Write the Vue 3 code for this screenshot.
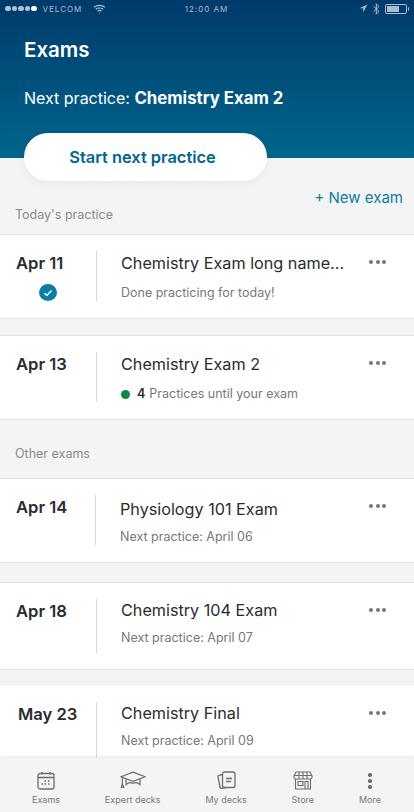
<script setup>
const todayExams = [
  { id: 1, date: "Apr 11", name: "Chemistry Exam long name...", done: true, note: "Done practicing for today!" },
  { id: 2, date: "Apr 13", name: "Chemistry Exam 2", count: 4, note: "Practices until your exam" },
];

const otherExams = [
  { id: 3, date: "Apr 14", name: "Physiology 101 Exam", note: "Next practice: April 06", variant: "shifted" },
  { id: 4, date: "Apr 18", name: "Chemistry 104 Exam", note: "Next practice: April 07", variant: "tall" },
  { id: 5, date: "May 23", name: "Chemistry Final", note: "Next practice: April 09", variant: "last" },
];

const sections = [
  { title: "Today's practice", exams: todayExams },
  { title: "Other exams", exams: otherExams },
];
</script>

<template>
  <div class="app">
    <header class="hero">
      <div class="status">
        <div class="status-left">
          <span class="signal"><i v-for="n in 5" :key="n"></i></span>
          <span>VELCOM</span>
          <svg class="wifi" width="13" height="10" viewBox="0 0 13 10" fill="none" stroke="currentColor" stroke-width="1.2">
            <path d="M1 3.2c3-2.4 8-2.4 11 0M2.8 5.2c2-1.6 5.4-1.6 7.4 0M4.6 7.1c1.1-.8 2.7-.8 3.8 0" />
            <path d="M6.5 9.6l-1-1.2h2z" fill="currentColor" stroke="none" />
          </svg>
        </div>
        <span class="clock">12:00 AM</span>
        <div class="status-right">
          <svg width="9" height="9" viewBox="0 0 9 9"><path d="M8.5.5L.5 4.3h3.7v3.9z" fill="currentColor" /></svg>
          <svg width="7" height="12" viewBox="0 0 7 12" fill="none" stroke="currentColor" stroke-width="1"><path d="M.6 3.2l5.3 5.2-2.6 2.8V.8l2.6 2.8-5.3 5.2" /></svg>
          <span class="battery"><i></i></span>
        </div>
      </div>
      <h1>Exams</h1>
      <p class="next">Next practice: <b>Chemistry Exam 2</b></p>
    </header>

    <main class="content">
      <button class="start">Start next practice</button>
      <a class="new-exam">+ New exam</a>

      <section v-for="section in sections" :key="section.title" class="section">
        <h2>{{ section.title }}</h2>
        <article v-for="exam in section.exams" :key="exam.id" class="card" :class="exam.variant">
          <div class="date">
            <strong>{{ exam.date }}</strong>
            <span v-if="exam.done" class="check">
              <svg width="10" height="8" viewBox="0 0 10 8" fill="none" stroke="#fff" stroke-width="1.5"><path d="M1.5 4.2l2.3 2.2 4.7-5" /></svg>
            </span>
          </div>
          <div class="body">
            <h3>{{ exam.name }}</h3>
            <p>
              <i v-if="exam.count" class="dot"></i>
              <b v-if="exam.count">{{ exam.count }}</b>
              <span>{{ exam.note }}</span>
            </p>
          </div>
          <span class="more-dots"><i v-for="n in 3" :key="n"></i></span>
        </article>
      </section>
    </main>

    <nav class="tabs">
      <div class="tab">
        <svg width="18" height="19" viewBox="0 0 18 19" fill="none" stroke="#6a6e72" stroke-width="1.3">
          <rect x="1" y="2.5" width="16" height="15.5" rx="2" />
          <path d="M1 6.500h16M5 1v2.500M13 1v2.500" />
          <path d="M7.5 10h1.500M11 10h1.500M4.500 13h1.500M7.500 13h1.500M11 13h1.500" stroke-width="1.6" />
        </svg>
        <span>Exams</span>
      </div>
      <div class="tab">
        <svg class="hat" width="26" height="18" viewBox="0 0 28 19" fill="none" stroke="#6a6e72" stroke-width="1.3">
          <path d="M14 1L27 6l-13 5L1 6z" />
          <path d="M6.5 8.5v6c2-2 5-2.5 7.500-1.500 2.500-1 5.500-.5 7.500 1.500v-6" />
          <path d="M2.5 7v6.500M1.500 17.500l1-4 1.500 4z" />
        </svg>
        <span>Expert decks</span>
      </div>
      <div class="tab">
        <svg width="19" height="19" viewBox="0 0 19 19" fill="none" stroke="#6a6e72" stroke-width="1.3">
          <rect x="5.5" y="1" width="12.5" height="15.5" rx="2" />
          <path d="M5.5 3.5l-3.500.8c-1 .2-1.200.8-1 1.700l2 10c.2 1 .9 1.500 1.800 1.300l4-.8" />
          <path d="M9 7.500h6M9 10.500h5" />
        </svg>
        <span>My decks</span>
      </div>
      <div class="tab">
        <svg width="20" height="19" viewBox="0 0 20 19" fill="none" stroke="#6a6e72" stroke-width="1.1">
          <path d="M3 1h14l2 4v1.500c0 1-1 1.500-1.800 1.500H2.800C2 8 1 7.500 1 6.500V5z" />
          <path d="M1 4.500h18M6 1v7M10 1v7M14 1v7" />
          <path d="M2.5 8v10h15V8" />
          <rect x="5" y="10.5" width="5" height="4" />
          <path d="M12 18v-7.500h3V18" />
        </svg>
        <span>Store</span>
      </div>
      <div class="tab">
        <span class="vdots"><i v-for="n in 3" :key="n"></i></span>
        <span>More</span>
      </div>
    </nav>
  </div>
</template>

<style>
html,
body {
  margin: 0;
  background: #f4f4f4;
}
</style>

<style scoped>
.app {
  position: relative;
  display: flex;
  flex-direction: column;
  width: 414px;
  height: 812px;
  overflow: hidden;
  background: #f4f4f4;
  color: #2b2b2d;
  font-family: Inter, "Liberation Sans", sans-serif;
}

.hero {
  flex: none;
  box-sizing: border-box;
  height: 158px;
  padding: 0 24px;
  background: linear-gradient(180deg, #003a6b 0%, #00668c 100%);
  color: #fff;
}

.status {
  display: flex;
  align-items: center;
  justify-content: space-between;
  height: 17px;
  margin: 0 -18px 0 -19px;
  color: #a9bdcc;
  font-size: 8px;
  letter-spacing: 1px;
}

.status-left,
.status-right {
  display: flex;
  flex: 1;
  align-items: center;
  gap: 6px;
}

.status-right {
  justify-content: flex-end;
  gap: 5px;
}

.signal {
  display: flex;
  gap: 1px;
}

.signal i {
  width: 5.5px;
  height: 5.5px;
  border-radius: 50%;
  background: #b4c4d0;
}

.signal i:last-child {
  background: #fff;
}

.wifi {
  margin-left: 5px;
}

.battery {
  position: relative;
  box-sizing: border-box;
  width: 22px;
  height: 10px;
  margin-right: 1px;
  padding: 1px;
  border: 1px solid currentColor;
  border-radius: 2px;
}

.battery::after {
  content: "";
  position: absolute;
  top: 2px;
  right: -3px;
  width: 1.5px;
  height: 4px;
  border-radius: 0 1px 1px 0;
  background: currentColor;
}

.battery i {
  display: block;
  width: 12px;
  height: 100%;
  background: currentColor;
}

h1 {
  margin: 16px 0 0;
  font-size: 20.5px;
  font-weight: 600;
  line-height: 34px;
}

.next {
  margin: 20px 0 0;
  font-size: 16px;
  line-height: 22px;
}

.next b {
  font-size: 16.8px;
  font-weight: 700;
}

.content {
  flex: 1;
  min-height: 0;
}

.start {
  position: relative;
  display: block;
  width: 243px;
  height: 48px;
  margin: -25px 0 0 24px;
  padding: 0 6px 0 0;
  border: 0;
  border-radius: 24px;
  background: #fff;
  box-shadow: 0 3px 10px rgba(0, 0, 0, 0.05);
  color: #00668c;
  font: 600 16.4px Inter, "Liberation Sans", sans-serif;
}

.new-exam {
  display: block;
  margin: 8px 11px 0 0;
  color: #0b7ea3;
  font-size: 15px;
  line-height: 18px;
  text-align: right;
}

.section h2 {
  margin: 0;
  padding: 0 15px;
  color: #8a8a8c;
  font-size: 12.5px;
  font-weight: 400;
  line-height: 16px;
}

.section + .section h2 {
  margin-top: 26px;
}

.card {
  display: flex;
  box-sizing: border-box;
  height: 85px;
  margin-top: 11px;
  padding: 16px 0 17px;
  border-top: 1px solid #e4e4e4;
  border-bottom: 1px solid #e4e4e4;
  background: #fff;
}

.card + .card {
  margin-top: 16px;
}

.card.shifted {
  margin-top: 16px;
}

.card.tall {
  height: 88px;
  margin-top: 19px;
  padding-bottom: 16px;
}

.card.last {
  height: 88px;
  padding: 15px 0 16px;
  border-top-color: #fff;
}

.date {
  display: flex;
  flex: none;
  flex-direction: column;
  align-items: flex-start;
  width: 97px;
  box-sizing: border-box;
  padding-left: 16px;
  border-right: 1px solid #d8d8d8;
}

.shifted .date {
  width: 96px;
  padding-left: 16px;
}

.last .date {
  padding-left: 18px;
}

.date strong {
  margin-top: 2px;
  font-size: 16.6px;
  font-weight: 600;
  line-height: 20px;
}

.check {
  display: flex;
  align-items: center;
  justify-content: center;
  width: 18px;
  height: 18px;
  margin: 11px 0 0 23px;
  border-radius: 50%;
  background: #0b7ea3;
}

.body {
  flex: 1;
  min-width: 0;
  padding-left: 24px;
}

.body h3 {
  margin: 2px 0 0;
  font-size: 16.2px;
  font-weight: 400;
  line-height: 20px;
  white-space: nowrap;
}

.shifted .body h3 {
  margin-top: 4px;
}

.tall .body h3,
.last .body h3 {
  margin-top: 1px;
}

.body p {
  display: flex;
  align-items: center;
  gap: 4px;
  margin: 11px 0 0;
  color: #77777a;
  font-size: 12.5px;
  line-height: 18px;
}

.shifted .body p,
.tall .body p,
.last .body p {
  margin-top: 9px;
}

.body b {
  color: #2b2b2d;
  font-weight: 600;
}

.dot {
  flex: none;
  width: 9px;
  height: 9px;
  margin-right: 3px;
  border-radius: 50%;
  background: #0b8a3e;
}

.more-dots {
  display: flex;
  flex: none;
  gap: 2.5px;
  margin: 9px 28px 0 12px;
}

.more-dots i {
  width: 4px;
  height: 4px;
  border-radius: 50%;
  background: #77777a;
}

.tabs {
  position: absolute;
  right: 0;
  bottom: 0;
  left: 0;
  display: flex;
  justify-content: space-between;
  box-sizing: border-box;
  height: 54px;
  padding: 12px 33px 0 32px;
  background: #f4f4f4;
  box-shadow: 0 -1px 3px rgba(0, 0, 0, 0.12);
}

.tab {
  display: flex;
  flex-direction: column;
  align-items: center;
  justify-content: flex-end;
  height: 35px;
  gap: 4px;
  color: #77777a;
  font-size: 9px;
  line-height: 11px;
}

.hat {
  margin: 0 0 1px 1px;
}

.vdots {
  display: flex;
  flex-direction: column;
  box-sizing: border-box;
  gap: 2.5px;
  height: 19px;
  padding-top: 2px;
}

.vdots i {
  width: 3.5px;
  height: 3.5px;
  border-radius: 50%;
  background: #6a6e72;
}
</style>
